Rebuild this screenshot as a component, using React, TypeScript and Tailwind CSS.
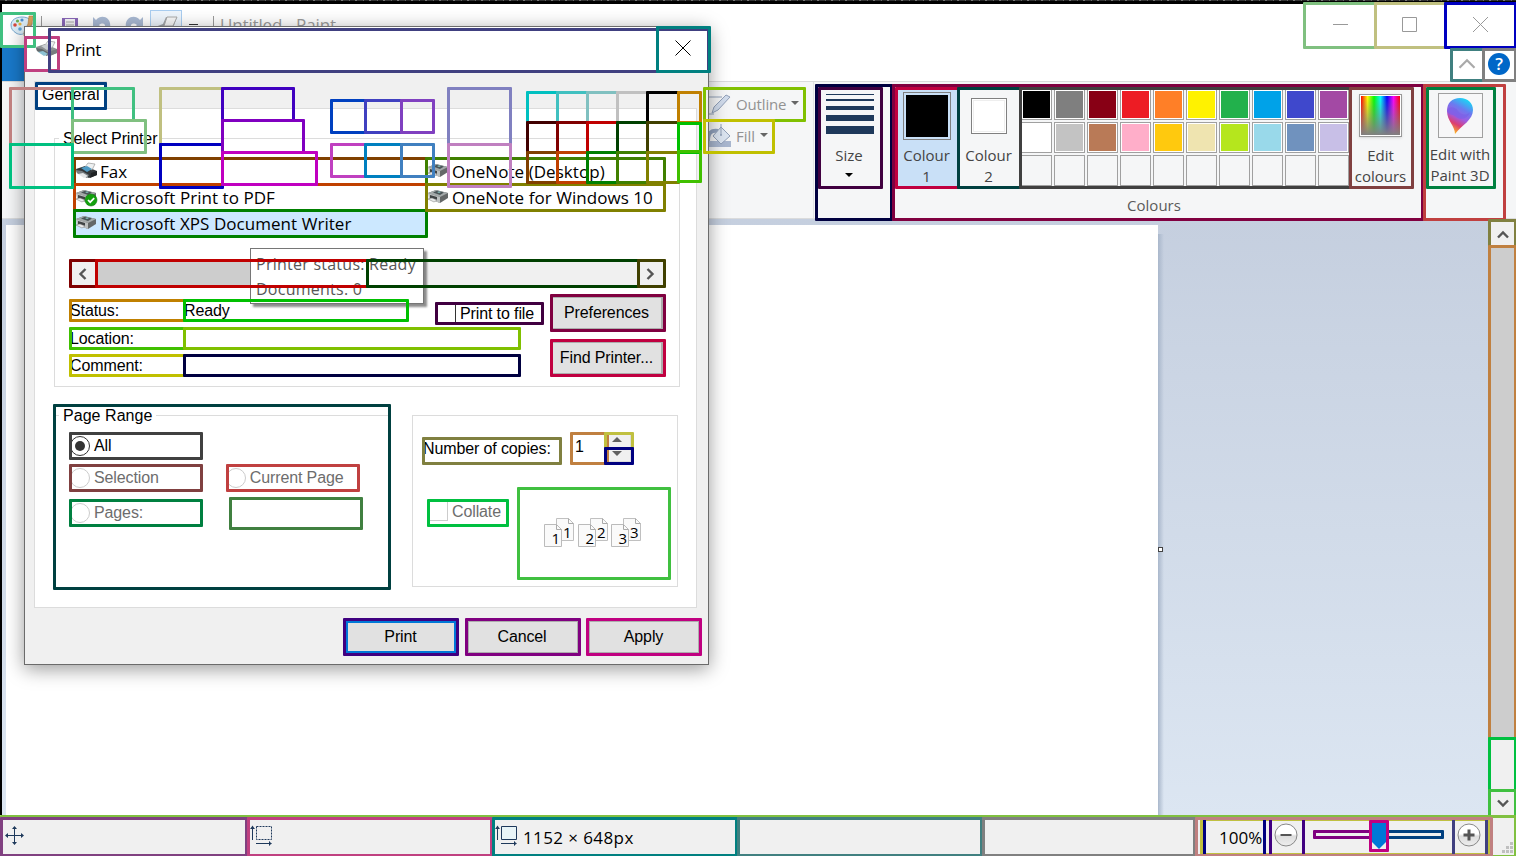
import React from "react";

type Region = [string, number, number, number, number];

/* Element regions: colour, left, top, right, bottom. Later entries lie on top. */
const REGIONS: Region[] = [
  ["#40c080", 0, 12, 36, 48],
  ["#80c080", 1303, 2, 1377, 49],
  ["#c0c080", 1374, 2, 1447, 49],
  ["#0000c0", 1444, 2, 1517, 49],
  ["#408080", 1450, 48, 1485, 82],
  ["#808080", 1482, 48, 1517, 82],
  ["#000040", 815, 84, 893, 221],
  ["#400040", 818, 87, 883, 189],
  ["#800040", 892, 84, 1424, 221],
  ["#c00040", 895, 87, 960, 189],
  ["#004040", 957, 87, 1022, 189],
  ["#404040", 1019, 87, 1352, 189],
  ["#804040", 1349, 87, 1414, 189],
  ["#c04040", 1423, 84, 1506, 221],
  ["#008040", 1426, 87, 1496, 189],
  ["#808040", 1488, 219, 1517, 248],
  ["#c08040", 1488, 245, 1517, 740],
  ["#00c040", 1488, 737, 1517, 792],
  ["#40c040", 1488, 789, 1517, 818],
  ["#80c040", 0, 815, 1517, 858],
  ["#804080", 0, 817, 248, 857],
  ["#c04080", 247, 817, 493, 857],
  ["#008080", 492, 817, 738, 857],
  ["#408080", 737, 817, 983, 857],
  ["#808080", 982, 817, 1196, 857],
  ["#c0c040", 1200, 818, 1490, 856],
  ["#000080", 1203, 817, 1266, 857],
  ["#400080", 1269, 817, 1305, 857],
  ["#800080", 1313, 830, 1372, 839],
  ["#004080", 1386, 830, 1444, 839],
  ["#c00080", 1369, 820, 1389, 852],
  ["#404080", 1452, 817, 1488, 857],
  ["#c08080", 1195, 817, 1493, 857],
  ["#c04080", 24, 36, 60, 72],
  ["#404080", 48, 28, 710, 73],
  ["#008080", 656, 26, 711, 73],
  ["#004080", 35, 82, 107, 110],
  ["#804000", 73, 157, 428, 186],
  ["#c04000", 73, 183, 428, 212],
  ["#008000", 73, 209, 428, 238],
  ["#408000", 425, 157, 666, 186],
  ["#808000", 425, 183, 666, 212],
  ["#c08080", 9, 87, 74, 146],
  ["#40c080", 71, 87, 135, 122],
  ["#80c080", 71, 119, 147, 154],
  ["#00c080", 9, 143, 74, 189],
  ["#c0c080", 159, 87, 224, 146],
  ["#0000c0", 159, 143, 224, 189],
  ["#4000c0", 221, 87, 295, 122],
  ["#8000c0", 221, 119, 305, 154],
  ["#c000c0", 221, 151, 318, 186],
  ["#0040c0", 330, 99, 367, 134],
  ["#4040c0", 364, 99, 403, 134],
  ["#8040c0", 400, 99, 435, 134],
  ["#c040c0", 330, 143, 367, 178],
  ["#0080c0", 364, 143, 403, 178],
  ["#4080c0", 400, 143, 435, 178],
  ["#8080c0", 447, 87, 512, 146],
  ["#c080c0", 447, 143, 512, 188],
  ["#00c0c0", 526, 91, 559, 124],
  ["#40c0c0", 556, 91, 589, 124],
  ["#80c0c0", 586, 91, 619, 124],
  ["#c0c0c0", 616, 91, 649, 124],
  ["#000000", 646, 91, 680, 124],
  ["#400000", 526, 121, 559, 154],
  ["#800000", 556, 121, 589, 154],
  ["#c00000", 586, 121, 619, 154],
  ["#004000", 616, 121, 649, 154],
  ["#404000", 646, 121, 680, 154],
  ["#804000", 526, 151, 559, 184],
  ["#c04000", 556, 151, 589, 184],
  ["#008000", 586, 151, 619, 184],
  ["#408000", 616, 151, 649, 184],
  ["#808000", 646, 151, 680, 184],
  ["#c08000", 677, 91, 702, 124],
  ["#00c000", 677, 122, 702, 154],
  ["#40c000", 677, 150, 702, 183],
  ["#80c000", 703, 87, 806, 122],
  ["#c0c000", 703, 119, 775, 154],
  ["#800000", 69, 259, 98, 288],
  ["#c00000", 95, 259, 369, 288],
  ["#004000", 366, 259, 640, 288],
  ["#404000", 637, 259, 666, 288],
  ["#c08000", 69, 299, 186, 322],
  ["#00c000", 183, 299, 409, 322],
  ["#40c000", 69, 327, 186, 350],
  ["#80c000", 183, 327, 521, 350],
  ["#c0c000", 69, 354, 186, 377],
  ["#000040", 183, 354, 521, 377],
  ["#400040", 435, 302, 544, 325],
  ["#800040", 550, 294, 666, 332],
  ["#c00040", 550, 339, 666, 377],
  ["#004040", 53, 404, 391, 590],
  ["#404040", 69, 432, 203, 460],
  ["#804040", 69, 464, 203, 492],
  ["#c04040", 226, 464, 360, 492],
  ["#008040", 69, 499, 203, 527],
  ["#408040", 229, 497, 363, 530],
  ["#808040", 422, 437, 562, 465],
  ["#c08040", 570, 432, 609, 465],
  ["#c0c040", 604, 432, 634, 450],
  ["#000080", 604, 447, 634, 465],
  ["#00c040", 427, 499, 509, 527],
  ["#40c040", 517, 487, 671, 580],
  ["#400080", 343, 618, 459, 656],
  ["#800080", 465, 618, 581, 656],
  ["#c00080", 586, 618, 702, 656],
];

const SWATCHES = [
  "bg-black", "bg-[#7f7f7f]", "bg-[#880015]", "bg-[#ed1c24]", "bg-[#ff7f27]",
  "bg-[#fff200]", "bg-[#22b14c]", "bg-[#00a2e8]", "bg-[#3f48cc]", "bg-[#a349a4]",
  "bg-white", "bg-[#c3c3c3]", "bg-[#b97a57]", "bg-[#ffaec9]", "bg-[#ffc90e]",
  "bg-[#efe4b0]", "bg-[#b5e61d]", "bg-[#99d9ea]", "bg-[#7092be]", "bg-[#c8bfe7]",
];

function PaletteIcon() {
  return (
    <svg className="h-6 w-6" viewBox="0 0 24 24">
      <path d="M1 13C1 8 6 5 12 5c6 0 10 3 10 7 0 3-3 3-5 3-3 0-1 3-2 5-1 3-6 3-9 1-3-2-5-4-5-8z" fill="#dcedf8" stroke="#79a9cf" />
      <circle cx="5" cy="13" r="1.8" fill="#d9483b" />
      <circle cx="7.500" cy="9" r="1.600" fill="#6bb04d" />
      <circle cx="12" cy="8" r="1.600" fill="#4d8fd0" />
      <circle cx="10" cy="12" r="1.600" fill="#e5b441" />
      <circle cx="10" cy="17" r="1.800" fill="#5fa6d8" />
      <path d="M19 4l4 0-1 8-4 6-2 5-2 1 0-4 4-8z" fill="#d9a05c" stroke="#b07838" strokeWidth=".6" />
    </svg>
  );
}

function PrinterIcon({ kind = "box" }: { kind?: "box" | "fax" | "pdf" | "title" }) {
  if (kind === "fax" || kind === "title")
    return (
      <svg className="h-5 w-[22px] shrink-0 overflow-visible" viewBox="0 0 22 20">
        <path d="M0 7l9-3 12 5v4l-8 3-12-5z" fill={kind === "fax" ? "#33383b" : "#8e9294"} />
        <path d="M9 5l3-4 7 1-3 6z" fill="#edf0f1" stroke="#888" strokeWidth=".6" />
        <path d="M5 6l6-2 5 3-5 3z" fill={kind === "fax" ? "#4e9ac4" : "#c9cdd0"} />
        <path d="M0 8l6 1 7 4-2 3-10-5z" fill={kind === "fax" ? "#777e82" : "#62696c"} />
        <path d="M2 12l5-1 5 3-4 2z" fill={kind === "fax" ? "#e4e6e7" : "#8dc2d4"} />
        <path d="M15 11l6-2v4l-7 3z" fill={kind === "fax" ? "#1f2224" : "#777c7f"} />
      </svg>
    );
  return (
    <svg className="h-5 w-[22px] shrink-0 overflow-visible" viewBox="0 0 22 20">
      <path d="M0 5l8-3 12 3v5l-8 5-5-2z" fill="#646868" />
      <path d="M0 5l8-3 12 3-8 4z" fill="#a3a9a9" />
      <path d="M5 4.500l4-1.800 7 1.800-4 2.400z" fill="#4b5558" />
      <path d="M9 4.100l2-.7 2 .7-2 1z" fill="#8cc9c5" />
      <path d="M0 5l12 4v6L1 11z" fill="#bcc0c0" />
      <path d="M2 7l7 2v3l-7-2z" fill="#3f4344" />
      <path d="M0 11l4-1 5 2-3 2z" fill="#e9ebeb" stroke="#777" strokeWidth=".5" />
      {kind === "pdf" && (
        <g>
          <circle cx="15" cy="12" r="6" fill="#13a10e" stroke="#0b7a0c" strokeWidth=".6" />
          <path d="M12 12l2.200 2.200 4-4" fill="none" stroke="white" strokeWidth="1.700" />
        </g>
      )}
    </svg>
  );
}

function Chevron({ d, className }: { d: string; className: string }) {
  return (
    <svg className={className} viewBox="0 0 12 12" fill="none">
      <path d={d} />
    </svg>
  );
}

const LEFT = "M8.5 1L3.5 6l5 5";
const RIGHT = "M3.5 1l5 5-5 5";
const UP = "M1 8.5l5-5 5 5";
const DOWN = "M1 3.5l5 5 5-5";

function TitleBar() {
  return (
    <div className="flex h-11 shrink-0 items-start bg-white">
      <div className="ml-2 mt-2"><PaletteIcon /></div>
      <div className="ml-[7px] mt-3 h-5 w-px bg-[#9a9a9a]" />
      <svg className="ml-5 mt-3.5 h-4 w-4" viewBox="0 0 16 16">
        <path d="M0 0h16v16H0z" fill="#8a68b8" />
        <path d="M3 1h10v10H3z" fill="#f5f5f8" />
        <path d="M4 4h8M4 7h8" stroke="#aaa" />
      </svg>
      <svg className="ml-[14px] mt-3 h-5 w-5" viewBox="0 0 20 20">
        <path d="M1 1v11h9L7 9c4-3 7-1 6 3h5C20 2 10-3 4 4z" fill="#a9b9d3" />
      </svg>
      <svg className="ml-[12px] mt-3 h-5 w-5" viewBox="0 0 20 20">
        <path d="M19 1v11h-9l3-3c-4-3-7-1-6 3H2C0 2 10-3 16 4z" fill="#a9b9d3" />
      </svg>
      <div className="ml-[6px] mt-1.5 h-8 w-8 border border-[#a9cdf0] bg-[#eef5fc]">
        <svg className="h-7 w-7" viewBox="0 0 28 28">
          <path d="M4 16l8-3 3-7h11l-4 11v7H4z" fill="#9da1a5" />
          <path d="M16 6h10l-4 9H13z" fill="#f7f7f7" stroke="#aaa" />
        </svg>
      </div>
      <div className="ml-[7px] mt-5 h-px w-[9px] bg-[#333]" />
      <div className="ml-[15px] mt-3 h-5 w-px bg-[#9a9a9a]" />
      <div className="ml-[6px] mt-[9px] w-[1084px] text-[17px] leading-6 tracking-[-0.15px] text-[#9b9b9b]">Untitled - Paint</div>
      <svg className="ml-[29px] mt-[12px] h-4 w-4 shrink-0" viewBox="0 0 16 16" stroke="#999"><path d="M0 8.5h15" /></svg>
      <svg className="ml-[53px] mt-[13px] h-4 w-4 shrink-0" viewBox="0 0 16 16" stroke="#999" fill="none"><path d="M.5.5h14v14H.5z" /></svg>
      <svg className="ml-[55px] mt-[13px] h-4 w-4 shrink-0" viewBox="0 0 16 16" stroke="#999"><path d="M0 0l15 15M15 0l-15 15" /></svg>
    </div>
  );
}

function Ribbon() {
  return (
    <div className="flex h-[138px] shrink-0 border-y border-[#dadbdc] bg-[#f5f6f7] text-[15px] text-[#444]">
      <div className="flex w-[812px] shrink-0 flex-col border-r border-[#e2e3e4] pl-[705px] text-[#929292]">
        <div className="mt-[6px] flex h-8 items-center">
          <svg className="h-6 w-6" viewBox="0 0 24 24">
            <path d="M0 5h15M0 22h7" stroke="#91a0b8" />
            <path d="M5 21l2-6L19 3l4 2-12 13z" fill="#d1dcec" stroke="#91a0b8" />
          </svg>
          <span className="ml-[5px] tracking-[-0.15px]">Outline</span>
          <span className="mb-[3px] ml-[5px] border-x-4 border-t-4 border-x-transparent border-t-[#666]" />
        </div>
        <div className="flex h-8 items-center">
          <svg className="h-6 w-6" viewBox="0 0 24 24">
            <path d="M0 17h24v6H0z" fill="#a9b7cf" />
            <path d="M1 17c0-8 3-11 10-10" stroke="#93a4bf" strokeWidth="4" fill="none" />
            <path d="M14 3l9 9-9 8-8-8z" fill="#dce5f1" stroke="#91a0b8" />
            <path d="M14 0v11" stroke="#91a0b8" /><circle cx="14" cy="11" r="1" fill="#91a0b8" />
          </svg>
          <span className="ml-[5px]">Fill</span>
          <span className="mb-[3px] ml-[5px] border-x-4 border-t-4 border-x-transparent border-t-[#666]" />
        </div>
      </div>
      <div className="flex w-[79px] shrink-0 flex-col items-center pr-[7px] pt-3">
        <div className="flex w-12 flex-col">
          <i className="h-px bg-[#1e395b]" />
          <i className="mt-1 h-0.5 bg-[#1e395b]" />
          <i className="mt-[5px] h-1 bg-[#1e395b]" />
          <i className="mt-[5px] h-1.5 bg-[#1e395b]" />
          <i className="mt-[5px] h-2 bg-[#1e395b]" />
        </div>
        <span className="mt-[11px] pr-[2px] leading-[21px]">Size</span>
        <span className="mr-[2px] mt-[7px] border-x-4 border-t-4 border-x-transparent border-t-black" />
      </div>
      <div className="flex w-[530px] shrink-0 flex-col">
        <div className="ml-[3px] flex h-[108px] pt-[5px]">
          <div className="flex h-[102px] w-[63px] flex-col items-center bg-[#c9e0f7] pr-[2px] pt-[5px] text-center">
            <div className="h-12 w-12 border border-[#808080] p-[2px]"><div className="h-full w-full bg-black" /></div>
            <span className="mt-[5px] leading-[21px]">Colour<br />1</span>
          </div>
          <div className="flex h-[102px] w-[62px] flex-col items-center pr-[3px] pt-[11px] text-center">
            <div className="h-9 w-9 border border-[#808080] bg-white p-[1px]"><div className="h-full w-full border border-[#eee]" /></div>
            <span className="mt-[11px] leading-[21px]">Colour<br />2</span>
          </div>
          <div className="mt-[2px] grid h-[97px] w-[328px] grid-cols-10 gap-0.5">
            {SWATCHES.map((s) => (
              <div key={s} className="h-[31px] w-[31px] border border-[#a0a0a0] bg-white p-[1px]">
                <div className={"h-full w-full " + s} />
              </div>
            ))}
            {SWATCHES.slice(0, 10).map((s) => (
              <div key={"e" + s} className="h-[31px] w-[31px] border border-[#a0a0a0] bg-[#f5f6f7]" />
            ))}
          </div>
          <div className="flex w-[63px] flex-col items-center pt-[7px] text-center">
            <div className="h-[43px] w-[43px] border border-[#999] bg-white p-[1px] shadow">
              <div className="h-full w-full bg-[linear-gradient(to_bottom,transparent,#808080),linear-gradient(to_right,red,yellow,lime,cyan,blue,magenta,red)]" />
            </div>
            <span className="mt-[8px] leading-[21px]">Edit<br />colours</span>
          </div>
        </div>
        <div className="mt-[5px] pr-[8px] text-center leading-[21px] text-[#5a5a5a]">Colours</div>
      </div>
      <div className="flex w-[74px] shrink-0 flex-col items-center pt-[11px] text-center">
        <div className="flex h-[45px] w-[45px] items-center justify-center border border-[#a0a0a0] bg-[#f7f7f8]">
          <svg className="h-9 w-7" viewBox="0 0 28 36">
            <defs>
              <linearGradient id="drop" x1=".7" y1="0" x2=".3" y2="1">
                <stop offset="0" stopColor="#14dcf5" /><stop offset=".3" stopColor="#6a7bf0" />
                <stop offset=".55" stopColor="#a05be0" /><stop offset=".75" stopColor="#dc3e72" /><stop offset="1" stopColor="#ffc21a" />
              </linearGradient>
            </defs>
            <path d="M14 0c8 0 13 5 13 12 0 10-11 15-18 24 0-8-8-13-8-23C1 5 6 0 14 0z" fill="url(#drop)" />
            <path d="M1 13c1-5 8-5 11 0 3 4 8 5 12 1-3 8-10 8-14 5-4-4-7-1-9-6z" fill="#7561e8" opacity=".6" />
          </svg>
        </div>
        <span className="mt-[6px] whitespace-nowrap leading-[21px]">Edit with<br />Paint 3D</span>
      </div>
    </div>
  );
}

function Workspace() {
  return (
    <div className="flex min-h-0 flex-1 bg-linear-to-b from-[#c5cfdf] to-[#dce6f2]">
      <div className="ml-1 mt-[6px] w-[1152px] shrink-0 bg-white" />
      <div className="mt-[15px] w-1.5 bg-linear-to-r from-[#a9b7cb] to-transparent">
        <div className="mt-[313px] h-[5px] w-[5px] border border-[#444] bg-white" />
      </div>
      <div className="flex-1" />
      <div className="flex w-[26px] shrink-0 flex-col bg-[#cdcdcd] ">
        <div className="flex h-[28px] items-center justify-center bg-[#f0f0f0] pr-px pt-[3px]"><Chevron d={UP} className="h-3 w-3 stroke-[#555] stroke-[2.4]" /></div>
        <div className="flex-1" />
        <div className="h-[52px] bg-[#f0f0f0]" />
        <div className="flex h-[26px] items-center justify-center bg-[#f0f0f0] pr-px pt-[2px]"><Chevron d={DOWN} className="h-3 w-3 stroke-[#555] stroke-[2.4]" /></div>
      </div>
    </div>
  );
}

function SizeIcon({ dashed }: { dashed: boolean }) {
  return (
    <svg className="h-[22px] w-[23px]" viewBox="0 0 23 22" fill="none" stroke="#1e395b">
      <path d="M2.5 15V2M.5 3.500h4M6 18.500h14M19.500 16.500v4" />
      <path d="M6.500 1.500h15v13h-15z" fill={dashed ? "none" : "#e8f4f7"} strokeDasharray={dashed ? "2 1" : undefined} />
      <path d="M2.500 .5l2 3h-4zM22 18.500l-3-2v4z" fill="#1e395b" stroke="none" />
    </svg>
  );
}

function ZoomButton({ plus }: { plus: boolean }) {
  return (
    <svg className="h-6 w-6 shrink-0" viewBox="0 0 24 24">
      <defs><linearGradient id="zoomFace" x2="0" y2="1"><stop offset=".45" stopColor="#fff" /><stop offset=".55" stopColor="#ddd" /><stop offset="1" stopColor="#eee" /></linearGradient></defs>
      <circle cx="12" cy="12" r="11" fill="url(#zoomFace)" stroke="#888" />
      <path d={plus ? "M6.500 12h11M12 6.500v11" : "M6.500 12h11"} stroke="#555" strokeWidth={plus ? 3 : 2} />
    </svg>
  );
}

function StatusBar() {
  return (
    <div className="flex h-[41px] shrink-0 bg-[#f0f0f0] text-black">
      <div className="w-[249px] pl-[5px] pt-[11px]">
        <svg className="h-[19px] w-[19px]" viewBox="0 0 19 19" stroke="#1e395b" fill="#1e395b">
          <path d="M9.500 1v17M1 9.500h17" />
          <path d="M9.500 0L12 3H7zM9.500 19l2.500-3H7zM0 9.500L3 7v5zM19 9.500L16 7v5z" stroke="none" />
        </svg>
      </div>
      <div className="w-[246px] pl-[1px] pt-[10px]"><SizeIcon dashed /></div>
      <div className="flex w-[725px] pt-[10px]">
        <SizeIcon dashed={false} />
        <span className="ml-[5px] text-[17px] leading-[25px] tracking-[0.4px]">1152 × 648px</span>
      </div>
      <div className="w-[51px] pt-[10px] text-[17px] leading-[25px]"><span className="-ml-px tracking-[0.05px]">100%</span></div>
      <div className="ml-[3px] pt-[7.500px]"><ZoomButton plus={false} /></div>
      <div className="ml-[74px] pt-2">
        <svg className="h-[26px] w-[14px]" viewBox="0 0 14 26"><path d="M0 0h14v19l-7 7-7-7z" fill="#0078d7" /></svg>
      </div>
      <div className="ml-[71px] pt-[7.500px]"><ZoomButton plus /></div>
      <svg className="ml-[20px] mt-[26px] h-3 w-3" viewBox="0 0 12 12" fill="#bfbfbf">
        <path d="M9 1h3v3H9zM9 5h3v3H9zM5 5h3v3H5zM9 9h3v3H9zM5 9h3v3H5zM1 9h3v3H1z" />
      </svg>
    </div>
  );
}

function Printer({ kind, name, selected = false }: { kind: "box" | "fax" | "pdf"; name: string; selected?: boolean }) {
  return (
    <div className={"flex h-[26px] items-center whitespace-nowrap pl-[2px] text-[17px] tracking-[0.05px] " + (selected ? "bg-[#cce8ff]" : "")}>
      <PrinterIcon kind={kind} />
      <span className="ml-[2px]">{name}</span>
    </div>
  );
}

function Radio({ label, checked = false }: { label: string; checked?: boolean }) {
  return (
    <div className={"flex h-7 items-center " + (checked ? "text-black" : "text-[#6d6d6d]")}>
      <span className={"flex h-5 w-5 items-center justify-center rounded-full border " + (checked ? "border-[#333]" : "border-[#ccc]")}>
        {checked && <span className="h-[10px] w-[10px] rounded-full bg-[#333]" />}
      </span>
      <span className="ml-1">{label}</span>
    </div>
  );
}

function Button({ label, primary = false }: { label: string; primary?: boolean }) {
  return (
    <div className={"flex h-[34px] w-[112px] items-center justify-center bg-[#e1e1e1] pr-px " + (primary ? "border-[3px] border-[#0078d7]" : "border-2 border-[#adadad]")}>
      {label}
    </div>
  );
}

function PrintDialog() {
  return (
    <div className="absolute left-6 top-[26px] flex h-[639px] w-[685px] flex-col border border-[#6b6b6b] bg-[#f0f0f0] font-['Liberation_Sans',sans-serif] text-[16px] leading-5 tracking-[-0.12px] text-black shadow-[0_4px_18px_rgba(0,0,0,0.4)]">
      <div className="flex h-[45px] shrink-0 items-center bg-white font-['Open_Sans',sans-serif]">
        <div className="ml-[11px]"><PrinterIcon kind="title" /></div>
        <span className="ml-[7px] w-[610px] text-[17px] tracking-[-0.4px]">Print</span>
        <svg className="mb-[3px] h-4 w-4" viewBox="0 0 16 16" stroke="#000"><path d="M.5.5l15 15M15.500.5l-15 15" /></svg>
      </div>
      <div className="ml-[9px] mt-[9px] h-[27px] w-[73px] shrink-0 border border-b-0 border-[#dcdcdc] bg-white pl-[7px] pt-[3px] tracking-[0.1px]">General</div>
      <div className="ml-[9px] flex h-[500px] w-[663px] shrink-0 flex-col border border-[#dcdcdc] bg-white">
        <div className="ml-[19px] mt-[29px] h-[249px] w-[626px] border border-[#dcdcdc]">
          <div className="-mt-[10px] ml-1 w-fit bg-white px-1">Select Printer</div>
          <div className="ml-[19px] mt-[10px] grid h-[78px] w-[592px] grid-flow-col grid-cols-[352px_240px] grid-rows-3 font-['Open_Sans',sans-serif]">
            <Printer kind="fax" name="Fax" />
            <Printer kind="pdf" name="Microsoft Print to PDF" />
            <Printer kind="box" name="Microsoft XPS Document Writer" selected />
            <Printer kind="box" name="OneNote (Desktop)" />
            <Printer kind="box" name="OneNote for Windows 10" />
          </div>
          <div className="ml-[15px] mt-[23px] flex h-[27px] w-[595px] bg-[#f0f0f0]">
            <div className="flex w-[26px] items-center justify-center"><Chevron d={LEFT} className="h-3 w-3 stroke-[#555] stroke-[2.4]" /></div>
            <div className="w-[272px] bg-[#cdcdcd]" />
            <div className="w-[270px]" />
            <div className="flex w-[24px] items-center justify-center"><Chevron d={RIGHT} className="h-3 w-3 stroke-[#555] stroke-[2.4]" /></div>
          </div>
          <div className="ml-[15px] mt-[9px] flex">
            <div className="grid w-[367px] grid-cols-[114px_253px] grid-rows-[28px_27px_27px] pt-[5px]">
              <span>Status:</span><span>Ready</span>
              <span>Location:</span><span />
              <span>Comment:</span><span />
            </div>
            <div className="flex h-[18px] w-[114px] pt-[8px]">
              <span className="h-[18px] w-[19px] shrink-0 border-r border-[#333]" />
              <span className="ml-1 whitespace-nowrap">Print to file</span>
            </div>
            <div className="flex flex-col gap-[11px]">
              <Button label="Preferences" />
              <Button label="Find Printer..." />
            </div>
          </div>
        </div>
        <div className="ml-[19px] mt-7 flex">
          <div className="h-[173px] w-[336px] border border-[#dcdcdc]">
            <div className="-mt-[10px] ml-1 w-fit bg-white px-1 tracking-[0.05px]">Page Range</div>
            <div className="ml-[15px] mt-[6px]">
              <Radio label="All" checked />
              <div className="mt-1 flex gap-[67px]"><Radio label="Selection" /><Radio label="Current Page" /></div>
              <div className="mt-[7px]"><Radio label="Pages:" /></div>
            </div>
          </div>
          <div className="ml-[22px] flex h-[172px] w-[266px] flex-col border border-[#dcdcdc]">
            <div className="ml-[10px] mt-[18px] flex">
              <span className="w-[149px] pt-[5px]">Number of copies:</span>
              <span className="w-[36px] pl-[3px] pt-[3px] text-[16px]">1</span>
              <span className="flex h-7 w-[23px] flex-col items-center border border-[#ddd] bg-[#f0f0f0] pr-[5px] pt-[2px]">
                <i className="border-x-[5px] border-b-[5px] border-x-transparent border-b-[#606060]" />
                <i className="mt-[9px] border-x-[5px] border-t-[5px] border-x-transparent border-t-[#606060]" />
              </span>
            </div>
            <div className="ml-[15px] mt-[39px] flex text-[#6d6d6d]">
              <span className="h-5 w-5 border border-[#ccc]" />
              <span className="ml-1 mt-px w-[92px]">Collate</span>
              <div className="mt-[17px] flex font-['Open_Sans',sans-serif] text-black">
                {["1", "2", "3"].map((n) => (
                  <svg key={n} className="h-8 w-[33.5px]" viewBox="0 0 33.5 32" fontSize="15">
                    <path d="M12.500.5h12l5 5v17h-17z" fill="#fafafa" stroke="#c0c0c0" />
                    <path d="M24.500.5v5h5" fill="none" stroke="#aaa" />
                    <text x="19" y="20">{n}</text>
                    <path d="M.5 6.500h12l5 5v17H.5z" fill="#fafafa" stroke="#bbb" />
                    <path d="M12.500 6.500v5h5" fill="none" stroke="#aaa" />
                    <text x="7.500" y="26">{n}</text>
                  </svg>
                ))}
              </div>
            </div>
          </div>
        </div>
      </div>
      <div className="ml-[320px] mt-[12px] flex gap-[9.500px]">
        <Button label="Print" primary /><Button label="Cancel" /><Button label="Apply" />
      </div>
      <div className="absolute left-[225px] top-[221px] h-[56px] w-[174px] border border-[#767676] bg-white pl-[5px] pt-[3px] font-['Open_Sans',sans-serif] text-[16px] leading-[25px] tracking-[0.25px] text-[#575757] shadow-[3px_3px_2px_rgba(0,0,0,0.45)]">
        Printer status: Ready<br />Documents: 0
      </div>
    </div>
  );
}

export default function App() {
  return (
    <div className="relative flex h-[856px] w-[1516px] flex-col overflow-hidden bg-white font-['Open_Sans',sans-serif]">
      <div className="h-1 shrink-0 bg-black">
        <div className="h-px bg-[repeating-linear-gradient(90deg,#222_0_5px,#777_5px_7px,#333_7px_13px,#666_13px_14px)]" />
      </div>
      <div className="flex min-h-0 flex-1 flex-col border-l-2 border-black">
        <TitleBar />
        <div className="flex h-[33px] shrink-0 justify-between bg-white">
          <div className="w-[60px] bg-[#1979ca]" />
          <div className="flex items-center pb-px">
            <Chevron d={UP} className="mr-[12px] h-[18px] w-[18px] stroke-[#aaa] stroke-[1.5]" />
            <div className="mr-[6px] flex h-[22px] w-[22px] items-center justify-center rounded-full bg-[#0067c8] text-[17px] font-semibold text-white">?</div>
          </div>
        </div>
        <Ribbon />
        <Workspace />
      </div>
      <StatusBar />
      <PrintDialog />
      {REGIONS.map(([color, left, top, right, bottom], i) => (
        <div
          key={i}
          className="pointer-events-none absolute rounded-[1px] border-[3px]"
          style={{ borderColor: color, left, top, width: right - left, height: bottom - top }}
        />
      ))}
    </div>
  );
}
